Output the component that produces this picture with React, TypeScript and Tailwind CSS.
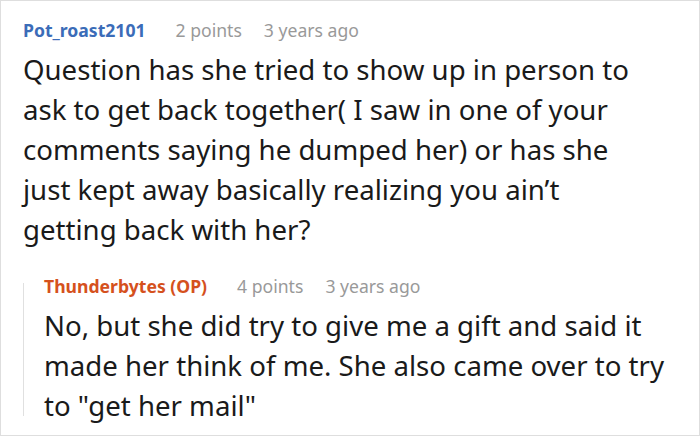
const font = { fontFamily: '"Noto Sans", "Open Sans", sans-serif' };

function Meta({ name, color, points, age }: { name: string; color: string; points: string; age: string }) {
  return (
    <div className="flex items-center h-[24px] text-[17.6px] leading-[24px]">
      <span className={`font-bold ${color}`}>{name}</span>
      <span className="ml-[30px] text-[#999999]">{points}</span>
      <span className="ml-[22px] text-[#999999]">{age}</span>
    </div>
  );
}

function Body({ lines }: { lines: string[] }) {
  return (
    <p className="mt-[7px] text-[27.6px] leading-[40px] whitespace-nowrap">
      {lines.map((l) => (
        <span key={l} className="block">
          {l}
        </span>
      ))}
    </p>
  );
}

export default function App() {
  return (
    <div
      style={font}
      className="w-[700px] h-[436px] bg-white border border-[#dedede] overflow-hidden text-[#1a1a1a]"
    >
      <div className="pl-[22px] pr-[6px] pt-[17px]">
        <Meta name="Pot_roast2101" color="text-[#3b6cb8]" points="2 points" age="3 years ago" />
        <Body
          lines={[
            "Question has she tried to show up in person to",
            "ask to get back together( I saw in one of your",
            "comments saying he dumped her) or has she",
            "just kept away basically realizing you ain’t",
            "getting back with her?",
          ]}
        />
        <div className="flex mt-[25px]">
          <div className="w-[1px] bg-[#e0e0e0] my-[9px] shrink-0" />
          <div className="pl-[20px]">
            <Meta name="Thunderbytes (OP)" color="text-[#d5511d]" points="4 points" age="3 years ago" />
            <Body
              lines={[
                "No, but she did try to give me a gift and said it",
                "made her think of me. She also came over to try",
                "to \"get her mail\"",
              ]}
            />
          </div>
        </div>
      </div>
    </div>
  );
}
